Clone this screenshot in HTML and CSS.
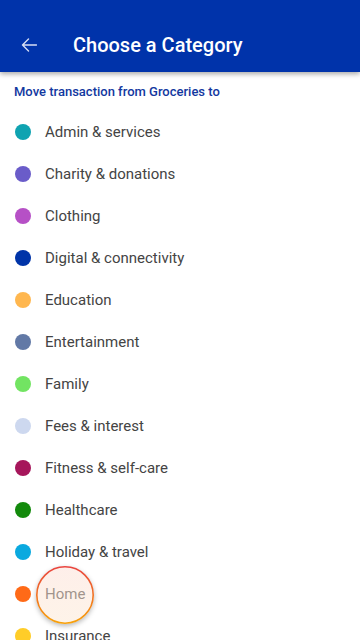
FILE: index.html
```
<!DOCTYPE html>
<html>
<head>
<meta charset="utf-8">
<link rel="stylesheet" href="styles.css">
</head>
<body>
<header class="appbar">
  <svg class="back" width="16" height="14" viewBox="0 0 16 14"><path d="M15.5 7H1.5M7.5 1L1.5 7L7.5 13" fill="none" stroke="#d6def3" stroke-width="1.4" stroke-linecap="round" stroke-linejoin="round"/></svg>
  <h1 class="title">Choose a Category</h1>
</header>
<p class="subtitle">Move transaction from Groceries to</p>
<ul class="list">
  <li class="row"><span class="dot" style="background:#0fa3b1"></span>Admin &amp; services</li>
  <li class="row"><span class="dot" style="background:#6a5cc9"></span>Charity &amp; donations</li>
  <li class="row"><span class="dot" style="background:#b650c6"></span>Clothing</li>
  <li class="row"><span class="dot" style="background:#0034a8"></span>Digital &amp; connectivity</li>
  <li class="row"><span class="dot" style="background:#ffb74f"></span>Education</li>
  <li class="row"><span class="dot" style="background:#6279a6"></span>Entertainment</li>
  <li class="row"><span class="dot" style="background:#72e462"></span>Family</li>
  <li class="row"><span class="dot" style="background:#cdd8ef"></span>Fees &amp; interest</li>
  <li class="row"><span class="dot" style="background:#a6165b"></span>Fitness &amp; self-care</li>
  <li class="row"><span class="dot" style="background:#138a0c"></span>Healthcare</li>
  <li class="row"><span class="dot" style="background:#0aa9df"></span>Holiday &amp; travel</li>
  <li class="row"><span class="dot" style="background:#ff6a17"></span>Home
    <div class="ripple">
      <svg width="58" height="58" viewBox="0 0 58 58">
        <defs>
          <linearGradient id="rg" x1="0" y1="0" x2="0" y2="1">
            <stop offset="0" stop-color="#e9443f"/>
            <stop offset="1" stop-color="#f7a10a"/>
          </linearGradient>
          <linearGradient id="fg" x1="0" y1="0" x2="0" y2="1">
            <stop offset="0" stop-color="rgb(252,222,212)" stop-opacity="0.5"/>
            <stop offset="1" stop-color="rgb(252,232,210)" stop-opacity="0.5"/>
          </linearGradient>
        </defs>
        <circle cx="29" cy="29" r="28.2" fill="url(#fg)" stroke="url(#rg)" stroke-width="1.6"/>
      </svg>
    </div>
  </li>
  <li class="row"><span class="dot" style="background:#ffcd28"></span>Insurance</li>
</ul>
</body>
</html>
```
FILE: styles.css
```
html, body {
  margin: 0;
  padding: 0;
  background: #ffffff;
  font-family: Roboto, "Liberation Sans", sans-serif;
  overflow: hidden;
  height: 640px;
}
.appbar {
  position: relative;
  z-index: 2;
  height: 48px;
  padding: 21px 0 3px 0;
  background: #0033aa;
  display: flex;
  align-items: center;
  box-shadow: 0 2px 5px rgba(0, 0, 0, 0.35);
}
.back {
  margin-left: 21px;
  width: 16px;
  height: 14px;
}
.title {
  margin: 0 0 0 36px;
  color: #ffffff;
  font-size: 20px;
  font-weight: 500;
  letter-spacing: 0;
}
.subtitle {
  margin: 0;
  padding: 11px 14px 0 14px;
  height: 28px;
  line-height: 18px;
  color: #1238a0;
  font-size: 13px;
  font-weight: 500;
}
.list {
  list-style: none;
  margin: 0;
  padding: 0;
}
.row {
  position: relative;
  height: 42px;
  display: flex;
  align-items: center;
  font-size: 15px;
  color: #444444;
}
.dot {
  width: 16px;
  height: 16px;
  border-radius: 50%;
  margin: 0 14px 0 15px;
  flex: none;
}
.ripple {
  position: absolute;
  left: 36px;
  top: -7.5px;
  width: 58px;
  height: 58px;
  border-radius: 50%;
  box-shadow: 0 2px 5px rgba(0, 0, 0, 0.28);
}
.ripple svg {
  display: block;
}
```
